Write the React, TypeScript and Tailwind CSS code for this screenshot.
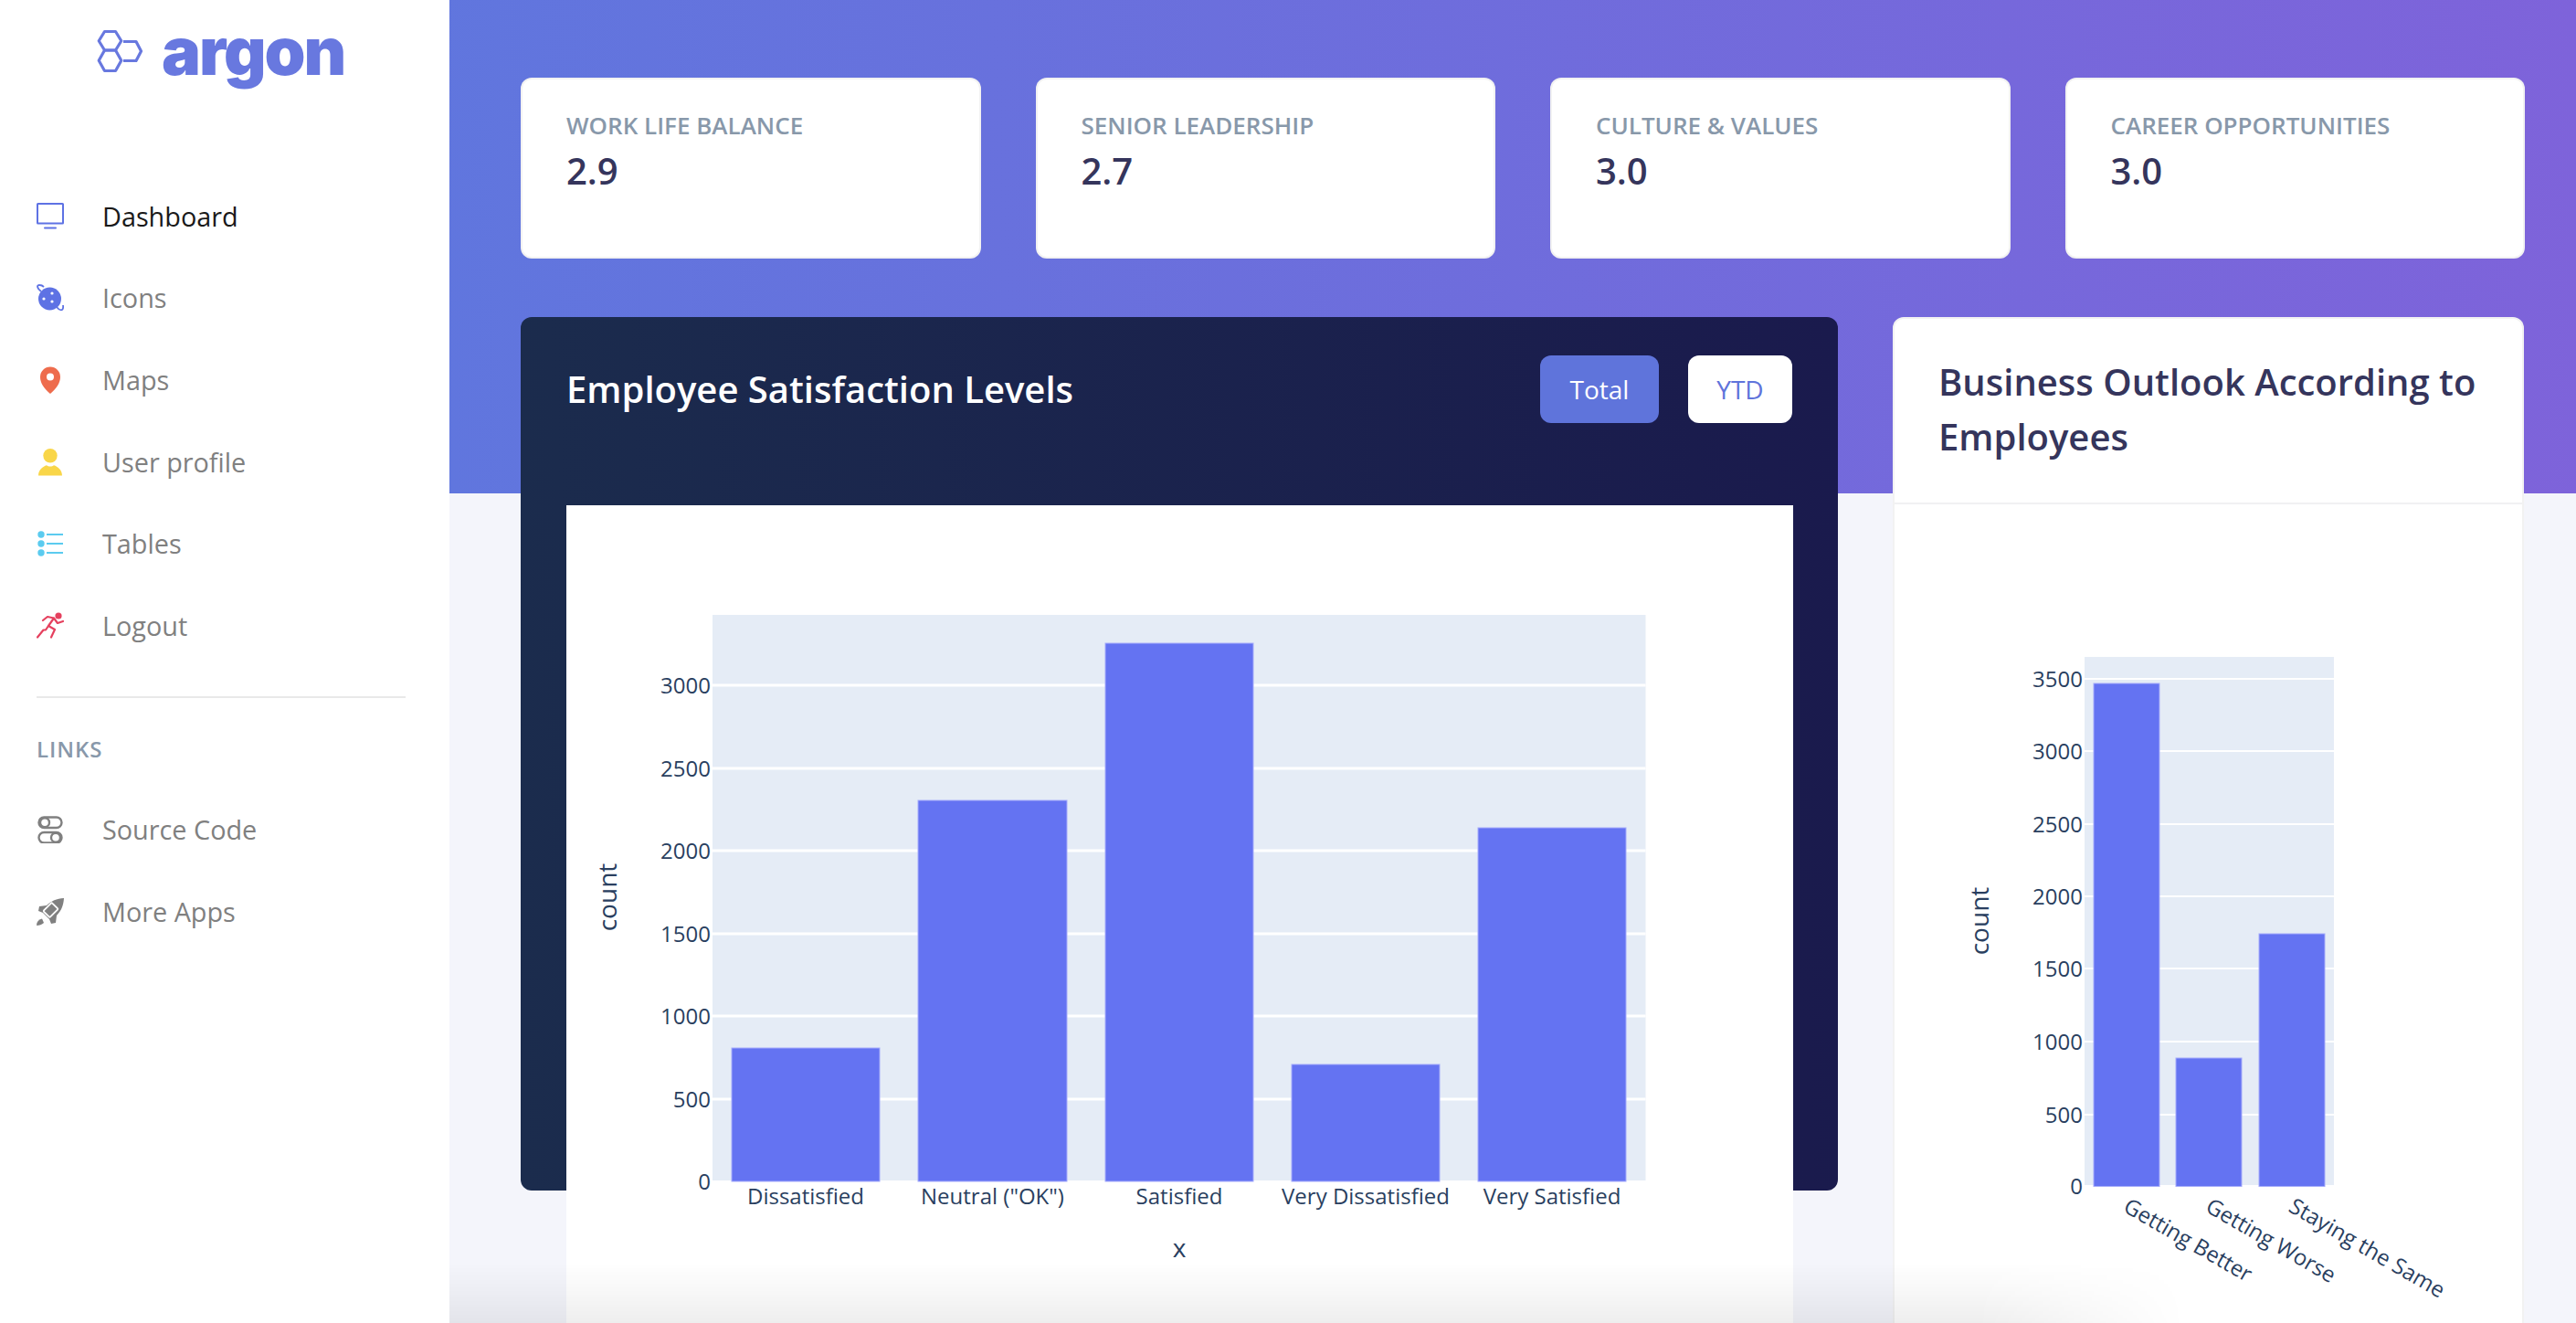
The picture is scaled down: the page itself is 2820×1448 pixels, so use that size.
import React from "react";

const tick = "font-['Open_Sans',sans-serif] text-[24px] fill-[#2a3f5f]";
const title = "font-['Open_Sans',sans-serif] text-[28px] fill-[#2a3f5f]";

function Monitor() {
  return (
    <svg width="30" height="30" viewBox="0 0 30 30">
      <rect x="1" y="1" width="28" height="21.5" fill="none" stroke="#5e72e4" strokeWidth="2" rx="0.5" />
      <rect x="8" y="26.5" width="14" height="2" rx="1" fill="#5e72e4" />
    </svg>
  );
}
function Planet() {
  return (
    <svg width="30" height="30" viewBox="0 0 30 30">
      <circle cx="14.5" cy="16" r="12.5" fill="#5e72e4" />
      <circle cx="8" cy="16" r="1.6" fill="#fff" />
      <circle cx="17" cy="10" r="1.6" fill="#fff" />
      <circle cx="17" cy="19" r="1.6" fill="#fff" />
      <path d="M5 8 C0 4 0 0.8 3.5 1 C5 1 7 2 8 3" fill="none" stroke="#5e72e4" strokeWidth="1.8" />
      <path d="M22 25 C25 29 30 30.5 29 23" fill="none" stroke="#5e72e4" strokeWidth="1.8" />
    </svg>
  );
}
function Pin() {
  return (
    <svg width="30" height="30" viewBox="0 0 30 30">
      <path d="M15 30 C8 24 4 18 4 11.500 A11 11 0 0 1 26 11.500 C26 18 22 24 15 30Z" fill="#ee6c4d" />
      <circle cx="15" cy="11.500" r="4" fill="#fff" />
    </svg>
  );
}
function User() {
  return (
    <svg width="30" height="30" viewBox="0 0 30 30">
      <circle cx="15" cy="7.700" r="7.700" fill="#f9d649" />
      <path d="M2 29.500 C2 23 7 19.500 11 18.200 C13 20 17 20 19 18.200 C23 19.500 28 23 28 29.500Z" fill="#f9d649" />
    </svg>
  );
}
function ListIcon() {
  return (
    <svg width="30" height="30" viewBox="0 0 30 30">
      <g fill="#5bcbef">
        <circle cx="5" cy="5" r="3.700" />
        <circle cx="5" cy="15" r="3.700" />
        <circle cx="5" cy="25" r="3.700" />
        <rect x="11" y="4" width="18" height="2" />
        <rect x="11" y="14" width="18" height="2" />
        <rect x="11" y="24" width="18" height="2" />
      </g>
    </svg>
  );
}
function Runner() {
  return (
    <svg width="30" height="30" viewBox="0 0 30 30">
      <circle cx="24" cy="4" r="3.600" fill="#e5405e" />
      <path
        d="M7 9 L12 5 L19 6.500 L23 12 L29 10 M19 6.500 L13 15 L20 19 L16 27.500 M13 15 L10 19.500 L7.500 19.500 L1 27.500"
        fill="none"
        stroke="#e5405e"
        strokeWidth="2.200"
        strokeLinecap="round"
        strokeLinejoin="round"
      />
    </svg>
  );
}
function Switches() {
  return (
    <svg width="30" height="30" viewBox="0 0 30 30">
      <g fill="none" stroke="#808080" strokeWidth="2.400">
        <rect x="2.500" y="1.500" width="25" height="11.500" rx="5.750" />
        <circle cx="9" cy="7.200" r="5" />
        <rect x="2.500" y="18" width="25" height="11.500" rx="5.750" />
        <circle cx="21" cy="23.700" r="5" />
      </g>
    </svg>
  );
}
function Rocket() {
  return (
    <svg width="30" height="30" viewBox="0 0 30 30">
      <path
        d="M30 0 C22 0.500 16 3 11 8 L3 9 L2 14 L7 16 L14 23 L16 28 L21 27 L22 19 C27 14 29.500 8 30 0Z"
        fill="#808080"
      />
      <rect x="9" y="8" width="13" height="10" rx="1" transform="rotate(-45 15.500 13)" fill="none" stroke="#fff" strokeWidth="1.800" />
      <circle cx="17" cy="12" r="2" fill="#808080" />
      <path d="M0 30 C0 26 2 23.500 6 22.500 L8 27 C6 29 3 30 0 30Z" fill="#808080" />
    </svg>
  );
}

function Nav({ icon, label, active }: { icon: React.ReactNode; label: string; active?: boolean }) {
  return (
    <div className="flex h-[89.6px] items-center pl-[40px]">
      <div className="flex w-[30px] shrink-0 items-center">{icon}</div>
      <span className={"ml-[42px] text-[28.8px] leading-[40px] " + (active ? "text-[#1a1a1a]" : "text-[#808080]")}>{label}</span>
    </div>
  );
}

function Stat({ label, value }: { label: string; value: string }) {
  return (
    <div className="h-[198px] rounded-xl border-2 border-black/5 bg-white px-[48px] pt-[31px]">
      <div className="text-[26px] font-semibold leading-[39px] text-[#8898aa]">{label}</div>
      <div className="mt-[6px] text-[40px] font-semibold leading-[48px] text-[#35355c]">{value}</div>
    </div>
  );
}

const mainBars = [
  { x: 801, w: 162, y: 1147 },
  { x: 1005, w: 163, y: 876 },
  { x: 1210, w: 162, y: 704 },
  { x: 1414, w: 162, y: 1165 },
  { x: 1618, w: 162, y: 906 },
];
const mainLabels = [
  { x: 882, t: "Dissatisfied" },
  { x: 1086.500, t: 'Neutral ("OK")' },
  { x: 1291, t: "Satisfied" },
  { x: 1495, t: "Very Dissatisfied" },
  { x: 1699, t: "Very Satisfied" },
];
const mainTicks = [
  { y: 750, t: "3000" },
  { y: 841, t: "2500" },
  { y: 931, t: "2000" },
  { y: 1022, t: "1500" },
  { y: 1112, t: "1000" },
  { y: 1203, t: "500" },
  { y: 1293, t: "0" },
];

function MainChart() {
  return (
    <svg width="1343" height="895" viewBox="620 553 1343 895" className="block">
      <rect x="780" y="673" width="1021.500" height="619" fill="#e5ecf6" />
      {mainTicks.slice(0, 6).map((t) => (
        <rect key={t.t} x="780" y={t.y - 1.5} width="1021.500" height="3" fill="#fff" />
      ))}
      {mainBars.map((b) => (
        <rect key={b.x} x={b.x} y={b.y} width={b.w} height={1293 - b.y} fill="#6473f2" stroke="#a5abfb" strokeWidth="1" />
      ))}
      {mainTicks.map((t) => (
        <text key={t.t} x="778" y={t.y + 9} textAnchor="end" className={tick}>
          {t.t}
        </text>
      ))}
      {mainLabels.map((l) => (
        <text key={l.t} x={l.x} y="1318" textAnchor="middle" className={tick}>
          {l.t}
        </text>
      ))}
      <text x="1291" y="1376" textAnchor="middle" className={title}>
        x
      </text>
      <text x="675" y="982" textAnchor="middle" transform="rotate(-90 675 982)" className={title}>
        count
      </text>
    </svg>
  );
}

const sideBars = [
  { x: 2292, w: 72, y: 748 },
  { x: 2382, w: 72, y: 1158 },
  { x: 2473, w: 72, y: 1022 },
];
const sideTicks = [
  { y: 743, t: "3500" },
  { y: 822, t: "3000" },
  { y: 902, t: "2500" },
  { y: 981, t: "2000" },
  { y: 1060, t: "1500" },
  { y: 1140, t: "1000" },
  { y: 1220, t: "500" },
  { y: 1298, t: "0" },
];
const sideLabels = [
  { x: 2323, t: "Getting Better" },
  { x: 2413, t: "Getting Worse" },
  { x: 2504, t: "Staying the Same" },
];

function SideChart() {
  return (
    <svg width="687" height="896" viewBox="2074 552 687 896" className="block">
      <rect x="2282" y="719" width="273" height="578" fill="#e5ecf6" />
      {sideTicks.slice(0, 7).map((t) => (
        <rect key={t.t} x="2282" y={t.y - 1} width="273" height="2" fill="#fff" />
      ))}
      {sideBars.map((b) => (
        <rect key={b.x} x={b.x} y={b.y} width={b.w} height={1298.500 - b.y} fill="#6473f2" stroke="#a5abfb" strokeWidth="1" />
      ))}
      {sideTicks.map((t) => (
        <text key={t.t} x="2280" y={t.y + 9} textAnchor="end" className={tick}>
          {t.t}
        </text>
      ))}
      {sideLabels.map((l) => (
        <text key={l.t} x={l.x} y="1325" transform={`rotate(30 ${l.x} 1325)`} className={tick}>
          {l.t}
        </text>
      ))}
      <text x="2177" y="1008" textAnchor="middle" transform="rotate(-90 2177 1008)" className={title}>
        count
      </text>
    </svg>
  );
}

export default function App() {
  return (
    <div className="relative flex h-[1448px] w-[2820px] overflow-hidden bg-[#f4f5fb] font-['Open_Sans',sans-serif]">
      <aside className="h-full w-[492px] shrink-0 bg-white">
        <div className="flex h-[192px] items-start pl-[105px] pt-[20px]">
          <svg width="54" height="52" viewBox="0 0 54 52" className="mt-[11px] shrink-0">
            <g fill="none" stroke="#6878df" strokeWidth="3.200" strokeLinejoin="round">
              <path d="M9.500 3.500 H21.500 L27.800 13.750 L21.500 24 H9.500 L3.200 13.750Z" />
              <path d="M30 14.500 H44 L49.500 25 L44 35.500 H30" />
              <path d="M9.500 24 H21.500 L27.800 35.250 L21.500 46.500 H9.500 L3.200 35.250Z" />
            </g>
          </svg>
          <span className="-mt-[4px] ml-[18px] text-[72px] font-black leading-[80px] tracking-[-2px] text-[#6878df] font-['Inter',sans-serif]">argon</span>
        </div>
        <Nav icon={<Monitor />} label="Dashboard" active />
        <Nav icon={<Planet />} label="Icons" />
        <Nav icon={<Pin />} label="Maps" />
        <Nav icon={<User />} label="User profile" />
        <Nav icon={<ListIcon />} label="Tables" />
        <Nav icon={<Runner />} label="Logout" />
        <div className="mx-[40px] mt-[32px] h-[2px] w-[404px] bg-[#e9e9e9]" />
        <div className="mt-[38px] pl-[40px] text-[24px] font-semibold leading-[36px] tracking-[0.96px] text-[#8898aa]">LINKS</div>
        <div className="mt-[26px]">
          <Nav icon={<Switches />} label="Source Code" />
          <Nav icon={<Rocket />} label="More Apps" />
        </div>
      </aside>

      <main className="relative min-w-0 flex-1">
        <div className="h-[540px] bg-[linear-gradient(87deg,#6076de,#7e63da)] pl-[78px] pr-[56px] pt-[85px]">
          <div className="grid grid-cols-4 gap-x-[60px]">
            <Stat label="WORK LIFE BALANCE" value="2.9" />
            <Stat label="SENIOR LEADERSHIP" value="2.7" />
            <Stat label="CULTURE & VALUES" value="3.0" />
            <Stat label="CAREER OPPORTUNITIES" value="3.0" />
          </div>
        </div>
        <div className="-mt-[193px] flex gap-x-[60px] pl-[78px] pr-[57px]">
          <section className="h-[956px] w-[1442px] shrink-0 rounded-xl bg-[linear-gradient(87deg,#1b2c4d,#1a1a4d)] px-[50px]">
            <div className="flex h-[206px] items-start justify-between pt-[42px]">
              <h3 className="pt-[7px] text-[40px] font-semibold leading-[60px] text-white">Employee Satisfaction Levels</h3>
              <div className="flex gap-x-[32px]">
                <div className="flex h-[74px] w-[130px] items-center justify-center rounded-xl bg-[#5f74db] text-[28px] text-white">Total</div>
                <div className="flex h-[74px] w-[114px] items-center justify-center rounded-xl bg-white text-[28px] text-[#5f74db]">YTD</div>
              </div>
            </div>
            <div className="w-[1343px] bg-white">
              <MainChart />
            </div>
          </section>
          <section className="h-[1200px] flex-1 rounded-t-xl border-2 border-black/5 bg-white">
            <div className="h-[203px] border-b-2 border-[#f1f1f3] pl-[48px] pr-[40px] pt-[39px]">
              <h2 className="text-[40px] font-semibold leading-[60px] text-[#35355c]">Business Outlook According to Employees</h2>
            </div>
            <SideChart />
          </section>
        </div>
        <div className="pointer-events-none absolute bottom-0 left-0 h-[66px] w-[1900px] bg-[linear-gradient(to_top,rgba(0,0,0,0.065),rgba(0,0,0,0.03)_50%,transparent)] [mask-image:linear-gradient(to_right,black_88%,transparent)]" />
      </main>
    </div>
  );
}
